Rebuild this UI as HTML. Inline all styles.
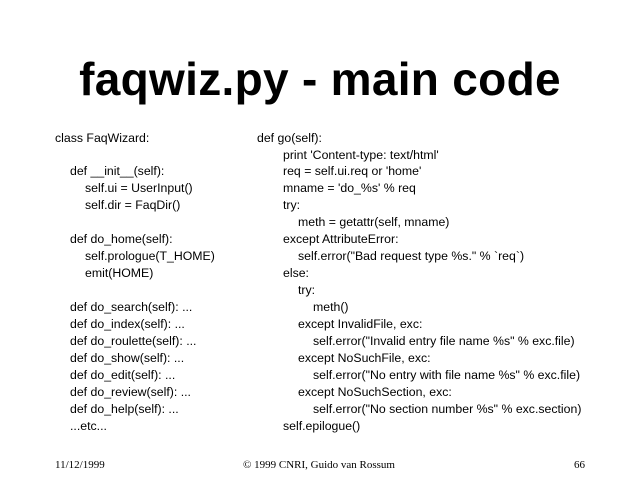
<!DOCTYPE html>
<html><head><style>
body{margin:0;width:640px;height:480px;background:#fff;position:relative;overflow:hidden;font-family:"Liberation Sans",sans-serif;color:#000}
h1{position:absolute;left:0;width:640px;top:54px;margin:0;text-align:center;font-size:46px;font-weight:bold;line-height:50px;white-space:nowrap;letter-spacing:0.3px}
.l{position:absolute;font-size:12.3px;line-height:14px;white-space:pre}
.f{position:absolute;top:458px;font-family:"Liberation Serif",serif;font-size:11px;line-height:14px;white-space:nowrap}
</style></head><body>
<h1>faqwiz.py - main code</h1>
<div class="l" style="left:55px;top:131px">class FaqWizard:</div>
<div class="l" style="left:70px;top:164px">def __init__(self):</div>
<div class="l" style="left:85px;top:181px">self.ui = UserInput()</div>
<div class="l" style="left:85px;top:198px">self.dir = FaqDir()</div>
<div class="l" style="left:70px;top:232px">def do_home(self):</div>
<div class="l" style="left:85px;top:249px">self.prologue(T_HOME)</div>
<div class="l" style="left:85px;top:266px">emit(HOME)</div>
<div class="l" style="left:70px;top:300px">def do_search(self): ...</div>
<div class="l" style="left:70px;top:317px">def do_index(self): ...</div>
<div class="l" style="left:70px;top:334px">def do_roulette(self): ...</div>
<div class="l" style="left:70px;top:351px">def do_show(self): ...</div>
<div class="l" style="left:70px;top:368px">def do_edit(self): ...</div>
<div class="l" style="left:70px;top:385px">def do_review(self): ...</div>
<div class="l" style="left:70px;top:402px">def do_help(self): ...</div>
<div class="l" style="left:70px;top:419px">...etc...</div>

<div class="l" style="left:257px;top:131px">def go(self):</div>
<div class="l" style="left:283px;top:148px">print 'Content-type: text/html'</div>
<div class="l" style="left:283px;top:164px">req = self.ui.req or 'home'</div>
<div class="l" style="left:283px;top:181px">mname = 'do_%s' % req</div>
<div class="l" style="left:283px;top:198px">try:</div>
<div class="l" style="left:298px;top:215px">meth = getattr(self, mname)</div>
<div class="l" style="left:283px;top:232px">except AttributeError:</div>
<div class="l" style="left:298px;top:249px">self.error("Bad request type %s." % `req`)</div>
<div class="l" style="left:283px;top:266px">else:</div>
<div class="l" style="left:298px;top:283px">try:</div>
<div class="l" style="left:313px;top:300px">meth()</div>
<div class="l" style="left:298px;top:317px">except InvalidFile, exc:</div>
<div class="l" style="left:313px;top:334px">self.error("Invalid entry file name %s" % exc.file)</div>
<div class="l" style="left:298px;top:351px">except NoSuchFile, exc:</div>
<div class="l" style="left:313px;top:368px">self.error("No entry with file name %s" % exc.file)</div>
<div class="l" style="left:298px;top:385px">except NoSuchSection, exc:</div>
<div class="l" style="left:313px;top:402px">self.error("No section number %s" % exc.section)</div>
<div class="l" style="left:283px;top:419px">self.epilogue()</div>

<div class="f" style="left:55px">11/12/1999</div>
<div class="f" style="left:243px">© 1999 CNRI, Guido van Rossum</div>
<div class="f" style="left:574px">66</div>
</body></html>
